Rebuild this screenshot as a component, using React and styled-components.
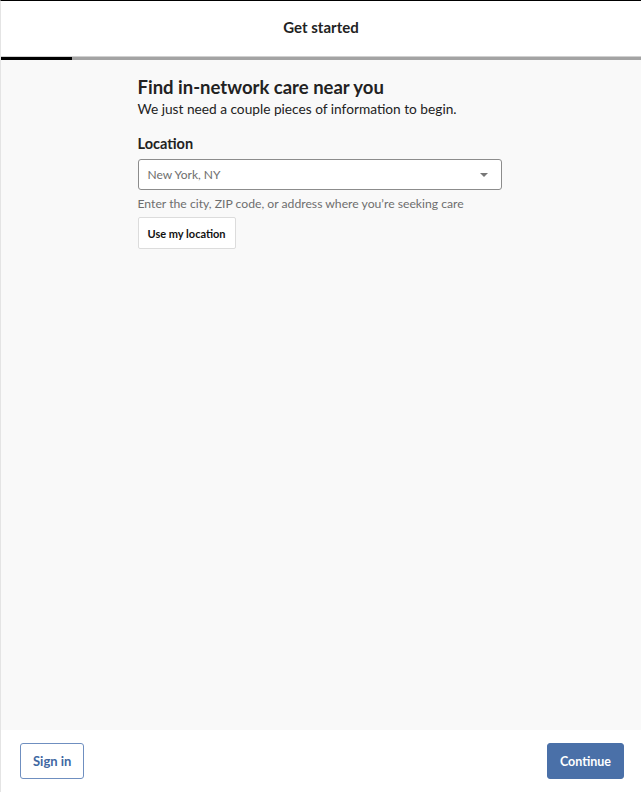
import React from 'react'
import styled, {createGlobalStyle} from 'styled-components'

const GlobalStyle = createGlobalStyle`
  html, body {
    margin: 0;
    padding: 0;
    background: #ffffff;
  }
  body {
    font-family: Lato, "Noto Sans", sans-serif;
    color: #1f1f1f;
  }
`

const Page = styled.div`
  height: 792px;
  display: flex;
  flex-direction: column;
  border-top: 1px solid #000;
  border-left: 1px solid #e4e4e4;
  box-sizing: border-box;
`

const Header = styled.header`
  height: 55px;
  display: flex;
  align-items: center;
  justify-content: center;
  padding-bottom: 4px;
  box-sizing: border-box;
  background: #fff;
  font-size: 15px;
  font-weight: 700;
  color: #222;
`

const Progress = styled.div`
  height: 4px;
  background: #a3a3a3;
  border-top: 1px solid #d0d0d0;
  box-sizing: border-box;
  display: flex;
`

const ProgressFill = styled.div`
  width: ${(props) => props.amount};
  background: #000;
`

const Main = styled.main`
  flex: 1;
  background: #f9f9f9;
  display: flex;
  justify-content: center;
  padding-right: 3px;
`

const Column = styled.div`
  width: 364px;
  padding-top: 15px;
`

const Title = styled.h1`
  margin: 0;
  font-size: 18.5px;
  font-weight: 700;
  line-height: 24px;
  color: #222;
`

const Subtitle = styled.p`
  margin: 0;
  font-size: 13.7px;
  line-height: 20px;
  color: #222;
`

const Label = styled.label`
  display: block;
  margin-top: 15px;
  font-size: 14.5px;
  font-weight: 700;
  line-height: 20px;
  color: #222;
`

const SelectBox = styled.div`
  margin-top: 5px;
  height: 31px;
  box-sizing: border-box;
  border: 1px solid #8c8c8c;
  border-radius: 3px;
  background: #fff;
  display: flex;
  align-items: center;
  justify-content: space-between;
  padding: 0 13px 0 9px;
  font-size: 12px;
  color: #6e6e6e;
`

const Caret = styled.span`
  width: 0;
  height: 0;
  border-left: 4px solid transparent;
  border-right: 4px solid transparent;
  border-top: 4px solid #777;
`

const Hint = styled.p`
  margin: 5px 0 0;
  font-size: 12.2px;
  line-height: 17px;
  color: #6e6e6e;
`

const OutlineButton = styled.button`
  margin-top: 5px;
  height: 32px;
  padding: 0 9px;
  background: #fff;
  border: 1px solid #dcdcdc;
  border-radius: 2px;
  font-family: inherit;
  font-size: 11px;
  font-weight: 700;
  color: #111;
`

const Footer = styled.footer`
  height: 62px;
  background: #fff;
  display: flex;
  align-items: center;
  justify-content: space-between;
  padding: 0 17px 0 19px;
`

const FooterButton = styled.button`
  height: 36px;
  padding: 0 12px;
  border-radius: 3px;
  border: 1px solid ${(props) => (props.primary ? '#4a70a8' : '#6f8fc0')};
  background: ${(props) => (props.primary ? '#4a70a8' : '#fff')};
  color: ${(props) => (props.primary ? '#fff' : '#3f67a2')};
  font-family: inherit;
  font-size: ${(props) => (props.primary ? '12.5px' : '13px')};
  font-weight: 700;
`

export default function App() {
  return (
    <Page>
      <GlobalStyle />
      <Header>Get started</Header>
      <Progress>
        <ProgressFill amount="71px" />
      </Progress>
      <Main>
        <Column>
          <Title>Find in-network care near you</Title>
          <Subtitle>We just need a couple pieces of information to begin.</Subtitle>
          <Label>Location</Label>
          <SelectBox>
            <span>New York, NY</span>
            <Caret />
          </SelectBox>
          <Hint>Enter the city, ZIP code, or address where you’re seeking care</Hint>
          <OutlineButton>Use my location</OutlineButton>
        </Column>
      </Main>
      <Footer>
        <FooterButton>Sign in</FooterButton>
        <FooterButton primary>Continue</FooterButton>
      </Footer>
    </Page>
  )
}
